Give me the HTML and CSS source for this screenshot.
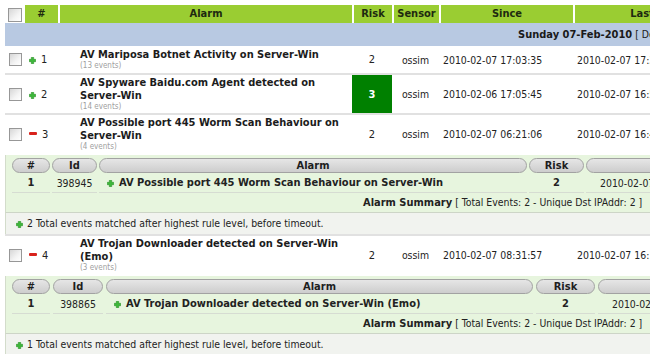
FILE: index.html
```html
<!DOCTYPE html>
<html>
<head>
<meta charset="utf-8">
<link rel="stylesheet" href="styles.css">
</head>
<body>
<table class="alarms">
  <colgroup>
    <col class="c-chk"><col class="c-num"><col class="c-alarm"><col class="c-risk"><col class="c-sensor"><col class="c-since"><col class="c-last">
  </colgroup>
  <thead>
    <tr class="head">
      <th class="chk-h"><span class="cb cb-lg"></span></th>
      <th class="num-h">#</th>
      <th>Alarm</th>
      <th>Risk</th>
      <th>Sensor</th>
      <th>Since</th>
      <th>Last</th>
    </tr>
  </thead>
  <tbody>
    <tr class="day">
      <td colspan="7"><b>Sunday 07-Feb-2010</b> [ Delete ]</td>
    </tr>
    <tr class="row">
      <td class="chk"><span class="cb"></span></td>
      <td class="num"><svg class="plus" viewBox="0 0 7 7" width="7" height="7"><path d="M2.3 0.3h2.4v2h2v2.4h-2v2h-2.4v-2h-2v-2.4h2z"/></svg>1</td>
      <td class="alarm"><div class="title">AV Mariposa Botnet Activity on Server-Win</div><div class="ev">(13 events)</div></td>
      <td class="risk">2</td>
      <td class="sensor">ossim</td>
      <td class="time">2010-02-07 17:03:35</td>
      <td class="time">2010-02-07 17:33:12</td>
    </tr>
    <tr class="row">
      <td class="chk"><span class="cb"></span></td>
      <td class="num"><svg class="plus" viewBox="0 0 7 7" width="7" height="7"><path d="M2.3 0.3h2.4v2h2v2.4h-2v2h-2.4v-2h-2v-2.4h2z"/></svg>2</td>
      <td class="alarm"><div class="title">AV Spyware Baidu.com Agent detected on<br>Server-Win</div><div class="ev">(14 events)</div></td>
      <td class="risk risk-hi">3</td>
      <td class="sensor">ossim</td>
      <td class="time">2010-02-06 17:05:45</td>
      <td class="time">2010-02-07 16:59:02</td>
    </tr>
    <tr class="row open">
      <td class="chk"><span class="cb"></span></td>
      <td class="num"><span class="minus"></span>3</td>
      <td class="alarm"><div class="title">AV Possible port 445 Worm Scan Behaviour on<br>Server-Win</div><div class="ev">(4 events)</div></td>
      <td class="risk">2</td>
      <td class="sensor">ossim</td>
      <td class="time">2010-02-07 06:21:06</td>
      <td class="time">2010-02-07 16:40:51</td>
    </tr>
    <tr class="detail">
      <td colspan="7">
        <div class="sub">
          <table class="subt subt-a">
            <colgroup><col class="s-num"><col class="s-id"><col class="s-alarm"><col class="s-risk"><col class="s-date"></colgroup>
            <tr class="pills">
              <th><div class="pill">#</div></th>
              <th><div class="pill">Id</div></th>
              <th><div class="pill">Alarm</div></th>
              <th><div class="pill">Risk</div></th>
              <th><div class="pill">Date</div></th>
            </tr>
            <tr class="srow">
              <td class="s-n">1</td>
              <td class="s-i">398945</td>
              <td class="s-a"><svg class="plus" viewBox="0 0 7 7" width="7" height="7"><path d="M2.3 0.3h2.4v2h2v2.4h-2v2h-2.4v-2h-2v-2.4h2z"/></svg>AV Possible port 445 Worm Scan Behaviour on Server-Win</td>
              <td class="s-r">2</td>
              <td class="s-d">2010-02-07 06:21:06</td>
            </tr>
            <tr class="summary">
              <td colspan="5"><b>Alarm Summary</b> [ Total Events: 2 - Unique Dst IPAddr: 2 ]</td>
            </tr>
          </table>
        </div>
        <div class="foot"><svg class="plus" viewBox="0 0 7 7" width="7" height="7"><path d="M2.3 0.3h2.4v2h2v2.4h-2v2h-2.4v-2h-2v-2.4h2z"/></svg>2 Total events matched after highest rule level, before timeout.</div>
      </td>
    </tr>
    <tr class="row open">
      <td class="chk"><span class="cb"></span></td>
      <td class="num"><span class="minus"></span>4</td>
      <td class="alarm"><div class="title">AV Trojan Downloader detected on Server-Win<br>(Emo)</div><div class="ev">(3 events)</div></td>
      <td class="risk">2</td>
      <td class="sensor">ossim</td>
      <td class="time">2010-02-07 08:31:57</td>
      <td class="time">2010-02-07 16:12:44</td>
    </tr>
    <tr class="detail">
      <td colspan="7">
        <div class="sub">
          <table class="subt subt-b">
            <colgroup><col class="s-num"><col class="s-id"><col class="s-alarm"><col class="s-risk"><col class="s-date"></colgroup>
            <tr class="pills">
              <th><div class="pill">#</div></th>
              <th><div class="pill">Id</div></th>
              <th><div class="pill">Alarm</div></th>
              <th><div class="pill">Risk</div></th>
              <th><div class="pill">Date</div></th>
            </tr>
            <tr class="srow">
              <td class="s-n">1</td>
              <td class="s-i">398865</td>
              <td class="s-a"><svg class="plus" viewBox="0 0 7 7" width="7" height="7"><path d="M2.3 0.3h2.4v2h2v2.4h-2v2h-2.4v-2h-2v-2.4h2z"/></svg>AV Trojan Downloader detected on Server-Win (Emo)</td>
              <td class="s-r">2</td>
              <td class="s-d">2010-02-07 08:31:57</td>
            </tr>
            <tr class="summary">
              <td colspan="5"><b>Alarm Summary</b> [ Total Events: 2 - Unique Dst IPAddr: 2 ]</td>
            </tr>
          </table>
        </div>
        <div class="foot"><svg class="plus" viewBox="0 0 7 7" width="7" height="7"><path d="M2.3 0.3h2.4v2h2v2.4h-2v2h-2.4v-2h-2v-2.4h2z"/></svg>1 Total events matched after highest rule level, before timeout.</div>
      </td>
    </tr>
  </tbody>
</table>
</body>
</html>
```
FILE: styles.css
```css
html, body {
  overflow: hidden;
}
body {
  margin: 0;
  padding: 5px 0 0 5px;
  background: #fff;
  width: 645px;
  height: 349px;
  font-family: "DejaVu Sans Condensed", "DejaVu Sans", sans-serif;
  font-stretch: condensed;
  font-size: 10.4px;
  color: #222;
}
b { font-size: 11px; }

.alarms {
  border-collapse: separate;
  border-spacing: 0;
  table-layout: fixed;
  width: 704px;
}
.c-chk { width: 20px; }
.c-num { width: 33px; }
.c-alarm { width: 294px; }
.c-risk { width: 40px; }
.c-sensor { width: 47px; }
.c-since { width: 134px; }
.c-last { width: 136px; }

.head th {
  background: #9acd32;
  border-left: 2px solid #fff;
  height: 18px;
  padding: 0;
  font-weight: bold;
  font-size: 11px;
  line-height: 18px;
  text-align: center;
  color: #1e2a10;
}
.head th.chk-h {
  background: #fff;
  border-left: 0;
  vertical-align: top;
  padding-top: 3px;
  height: 15px;
  line-height: 0;
}
.head th.num-h { border-left: 0; }

.cb {
  display: inline-block;
  width: 11px;
  height: 11px;
  border: 1px solid #979797;
  background: linear-gradient(135deg, #d6d6d6 0%, #f4f4f4 60%, #fff 100%);
  vertical-align: middle;
}
.cb-lg { width: 12px; height: 12px; }

.day td {
  background: #b8c9e2;
  height: 23px;
  padding: 0 0 0 513px;
  color: #1a1a1a;
  white-space: nowrap;
}

.row td {
  border-bottom: 2px solid #e1e1e1;
  vertical-align: middle;
  padding: 0;
}
.row.open td { border-bottom: 0; padding-bottom: 2px; }
.row td.chk {
  height: 27px;
  text-align: center;
  line-height: 0;
}
.row td.num {
  padding-left: 4px;
  white-space: nowrap;
  font-size: 11px;
}
.plus {
  display: inline-block;
  vertical-align: -1px;
  margin-right: 5px;
}
.plus path {
  fill: #3db83a;
  stroke: #23861f;
  stroke-width: 0.5;
}
.minus {
  display: inline-block;
  width: 8px;
  height: 3px;
  background: #d8231c;
  border-radius: 1px;
  margin-right: 5px;
  vertical-align: 3px;
}
.row td.alarm {
  padding: 1px 0 1px 22px;
}
.row.open td.alarm { padding-bottom: 3px; }
.title {
  font-weight: bold;
  font-size: 11px;
  line-height: 13px;
  color: #1c1c1c;
}
.ev {
  font-size: 8px;
  line-height: 10px;
  color: #a0a0a0;
}
.row td.risk { text-align: center; font-size: 11px; }
.row td.risk-hi {
  background: #008000;
  color: #fff;
  font-weight: bold;
}
.row td.sensor { text-align: center; }
.row td.time {
  padding-left: 4px;
  white-space: nowrap;
}

.detail > td {
  padding: 0;
  border-bottom: 2px solid #e1e1e1;
}
.sub {
  background: #e7f5de;
  border-left: 1px solid #d3dccb;
  padding-top: 3px;
}
.subt {
  border-collapse: separate;
  table-layout: fixed;
}
.subt-a {
  border-spacing: 2px 0;
  margin-left: 4px;
  width: 744px;
}
.subt-a .s-num { width: 38px; }
.subt-a .s-id { width: 45px; }
.subt-a .s-alarm { width: 428px; }
.subt-a .s-risk { width: 55px; }
.subt-a .s-date { width: 170px; }
.subt-b {
  border-spacing: 3px 0;
  margin-left: 3px;
  width: 760px;
}
.subt-b .s-num { width: 38px; }
.subt-b .s-id { width: 50px; }
.subt-b .s-alarm { width: 427px; }
.subt-b .s-risk { width: 59px; }
.subt-b .s-date { width: 170px; }

.pills th {
  padding: 0;
  font-weight: bold;
}
.pill {
  height: 13px;
  line-height: 13px;
  border: 1px solid #a2a2a2;
  border-radius: 8px;
  background: linear-gradient(#e6e6e6, #cdcdcd);
  text-align: center;
  color: #1e1e1e;
  font-size: 11px;
}
.srow td {
  height: 19px;
  padding: 0;
  border-bottom: 1px solid #d6dcd2;
  white-space: nowrap;
}
.s-n { text-align: center; font-weight: bold; font-size: 11px; }
.s-i { text-align: center; }
.s-a { padding-left: 8px !important; font-weight: bold; font-size: 11px; }
.s-r { text-align: center; font-weight: bold; font-size: 11px; }
.s-d { padding-left: 14px !important; }
.summary td {
  height: 19px;
  padding: 0 0 0 351px;
  white-space: nowrap;
}
.foot {
  background: #f1f3ef;
  border-top: 1px solid #cdd5c7;
  border-left: 1px solid #d3dccb;
  height: 21px;
  line-height: 21px;
  padding-left: 10px;
  white-space: nowrap;
  color: #222;
}
.foot .plus { margin-right: 4px; }
```
